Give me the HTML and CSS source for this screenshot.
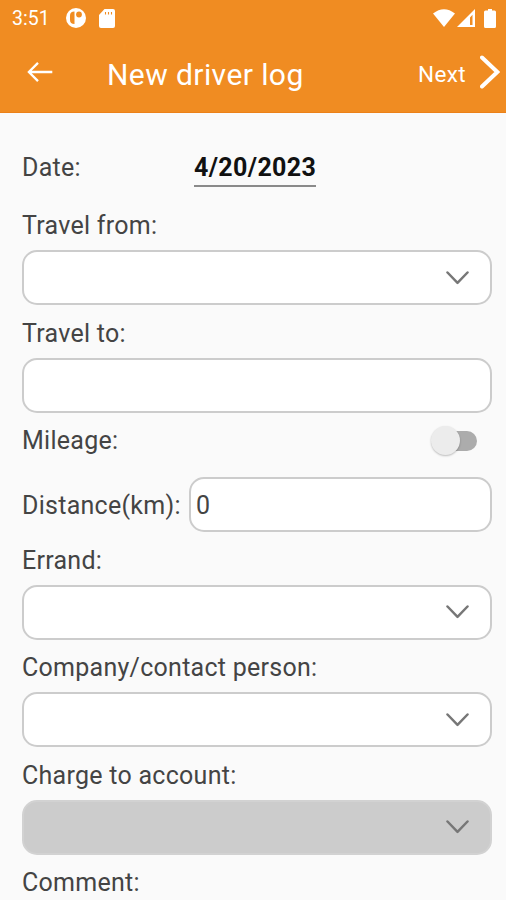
FILE: index.html
```html
<!DOCTYPE html>
<html lang="en">
<head>
<meta charset="utf-8">
<title>New driver log</title>
<link rel="stylesheet" href="styles.css">
</head>
<body>
<header class="top">
  <div class="status">
    <span class="clock">3:51</span>
    <svg class="app-icon" width="20" height="20" viewBox="0 0 20 20"><circle cx="10" cy="10" r="10" fill="#fff"/><path d="M8.500 3.500v12.500q-4.500 0-4.500-4V7.500q0-4 4.500-4z" fill="#f08c22"/><circle cx="13" cy="6.500" r="2.900" fill="#f08c22"/></svg>
    <svg class="sd-icon" width="16" height="19" viewBox="0 0 16 19"><path d="M5.500 0H14q2 0 2 2v15q0 2-2 2H2q-2 0-2-2V6z" fill="#fff"/><path d="M6.500 3v2.500M9.500 3v2.500M12.500 3v2.500" stroke="#f08c22" stroke-width="1.100"/></svg>
    <svg class="wifi-icon" width="22" height="18" viewBox="0 0 22 18"><path d="M0 4.500Q11-4.200 22 4.500L11 18z" fill="#fff"/></svg>
    <svg class="signal-icon" width="18" height="18" viewBox="0 0 18 18"><path fill-rule="evenodd" d="M0 18L18 0V18zM13 8.500V16H15.500V5.800z" fill="#fff"/></svg>
    <svg class="battery-icon" width="12" height="19" viewBox="0 0 12 19"><path d="M4 0h4v1.500h2.500q1.500 0 1.500 1.500v14.500q0 1.500-1.500 1.500h-9Q0 19 0 17.500V3q0-1.500 1.500-1.500H4z" fill="#fff"/></svg>
  </div>
  <div class="bar">
    <svg class="back" width="26" height="20" viewBox="0 0 26 20" fill="none" stroke="#fff" stroke-width="2.300"><path d="M25.300 10H2M11 .9L1.900 10l9.100 9.100"/></svg>
    <h1 class="title">New driver log</h1>
    <span class="next">Next</span>
    <svg class="forward" width="20" height="34" viewBox="0 0 20 34" fill="none" stroke="#fff" stroke-width="4" stroke-linecap="round"><path d="M2 2.500L17.300 17 2 31.500"/></svg>
  </div>
</header>
<main class="form">
  <div class="date-row"><span class="date-label">Date:</span><span class="date">4/20/2023</span></div>
  <div class="label">Travel from:</div>
  <div class="field"><svg class="chevron" width="23" height="14" viewBox="0 0 23 14"><path d="M1.500 1.500L11.500 11.800 21.500 1.500"/></svg></div>
  <div class="label">Travel to:</div>
  <div class="field"></div>
  <div class="mileage-row"><span>Mileage:</span><span class="switch"><span class="thumb"></span></span></div>
  <div class="distance-row"><span class="distance-label">Distance(km):</span><div class="field value">0</div></div>
  <div class="label">Errand:</div>
  <div class="field"><svg class="chevron" width="23" height="14" viewBox="0 0 23 14"><path d="M1.500 1.500L11.500 11.800 21.500 1.500"/></svg></div>
  <div class="label">Company/contact person:</div>
  <div class="field"><svg class="chevron" width="23" height="14" viewBox="0 0 23 14"><path d="M1.500 1.500L11.500 11.800 21.500 1.500"/></svg></div>
  <div class="label">Charge to account:</div>
  <div class="field disabled"><svg class="chevron" width="23" height="14" viewBox="0 0 23 14"><path d="M1.500 1.500L11.500 11.800 21.500 1.500"/></svg></div>
  <div class="label">Comment:</div>
</main>
</body>
</html>
```
FILE: styles.css
```css
* { box-sizing: border-box; }
body {
  margin: 0;
  height: 900px;
  overflow: hidden;
  background: #fafafa;
  color: #444;
  font: 25px/30px Roboto, "Liberation Sans", sans-serif;
  letter-spacing: 0.27px;
}
svg { display: block; flex: none; }
.top { height: 113px; background: #f08c22; color: #fff; border-bottom: 1px solid #ec8118; }
.status { height: 36px; display: flex; align-items: center; padding: 0 10px 0 12px; }
.clock { width: 54px; font-size: 19.5px; letter-spacing: 0; line-height: 36px; padding-top: 1px; }
.app-icon { margin-top: -1px; }
.sd-icon { margin-left: 13px; }
.wifi-icon { margin-left: auto; }
.signal-icon { margin-left: 2px; }
.battery-icon { margin-left: 9px; }
.bar { height: 72px; display: flex; align-items: center; padding: 0 6px 0 27px; }
.title { margin: 6px 0 0 54px; font-size: 30px; font-weight: 400; letter-spacing: 0.42px; line-height: 36px; }
.next { margin: 3px 14px 0 auto; font-size: 22.5px; letter-spacing: 0.35px; }
.form { padding: 0 14px 0 22px; }
.date-row { height: 84.5px; display: flex; align-items: flex-start; padding-top: 40px; }
.date-label { width: 172px; }
.date { height: 34px; border-bottom: 2px solid #8a8a8a; color: #111; font-weight: 700; letter-spacing: 0.36px; }
.label { height: 52.5px; padding-top: 13.5px; }
.field {
  height: 55px;
  display: flex;
  align-items: center;
  justify-content: flex-end;
  padding-right: 21px;
  border: 2px solid #ccc;
  border-radius: 15px;
  background: #fff;
}
.chevron { fill: none; stroke: #777; stroke-width: 2.5; stroke-linecap: round; stroke-linejoin: round; }
.disabled { background: #ccc; border-color: #d2d2d2; }
.mileage-row { height: 64.5px; display: flex; justify-content: space-between; padding: 13.5px 15px 0 0; }
.switch { width: 43px; height: 20px; margin: 5px 0 0; background: #acacac; border-radius: 10px; position: relative; }
.thumb { position: absolute; left: -3px; top: -5px; width: 29px; height: 29px; border-radius: 50%; background: #ececec; box-shadow: 0 1px 2px rgba(0, 0, 0, 0.25); }
.distance-row { height: 55px; display: flex; align-items: center; }
.distance-label { width: 167px; padding-top: 3px; }
.value { flex: 1; justify-content: flex-start; padding: 3px 0 0 5px; }
```
